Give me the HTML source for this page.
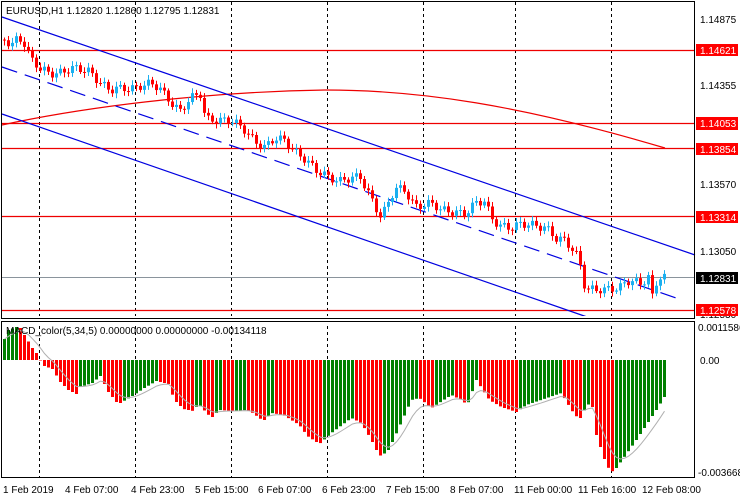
<!DOCTYPE html>
<html><head><meta charset="utf-8"><style>
html,body{margin:0;padding:0;background:#fff;width:740px;height:500px;overflow:hidden}
svg{display:block}
text{font-family:"Liberation Sans",sans-serif;font-size:10px;fill:#000}
</style></head><body>
<svg id="s" width="740" height="500" viewBox="0 0 740 500" xmlns="http://www.w3.org/2000/svg">
<rect width="740" height="500" fill="#fff"/>
<g id="grid" stroke="#000" stroke-dasharray="3,3" stroke-width="1">
<line x1="39.5" y1="2" x2="39.5" y2="477"/><line x1="135.5" y1="2" x2="135.5" y2="477"/><line x1="231.5" y1="2" x2="231.5" y2="477"/><line x1="327.5" y1="2" x2="327.5" y2="477"/><line x1="423.5" y1="2" x2="423.5" y2="477"/><line x1="515.5" y1="2" x2="515.5" y2="477"/><line x1="611.5" y1="2" x2="611.5" y2="477"/>
</g>
<rect x="0" y="316" width="695" height="7" fill="#fff"/>
<g stroke="#e00" stroke-width="1.3" fill="none">
<line x1="2" y1="50.5" x2="695" y2="50.5"/><line x1="2" y1="123.5" x2="695" y2="123.5"/><line x1="2" y1="148.5" x2="695" y2="148.5"/><line x1="2" y1="216.5" x2="695" y2="216.5"/><line x1="2" y1="310.5" x2="695" y2="310.5"/>
<path d="M2,125 C80,108 200,92 325,90 C420,90 520,105 665,148" stroke-width="1.2"/>
</g>
<line x1="2" y1="277.5" x2="695" y2="277.5" stroke="#8a949c"/>
<g stroke="#0000e0" stroke-width="1.2" fill="none">
<line x1="2" y1="17" x2="695" y2="255"/>
<line x1="2" y1="67" x2="682" y2="300" stroke-dasharray="16,8"/>
<line x1="2" y1="114" x2="590" y2="318"/>
</g>
<g id="cand"></g>
<g id="hist"></g>
<path id="sig" fill="none" stroke="#b0b0b0" stroke-width="1"/>
<rect x="0" y="316" width="695" height="7" fill="#fff"/>
<g stroke="#000" fill="none" stroke-width="1">
<rect x="1.5" y="1.5" width="693" height="317"/>
<rect x="1.5" y="321.5" width="693" height="156"/>
</g>
<text x="6" y="14">EURUSD,H1  1.12820 1.12860 1.12795 1.12831</text>
<text x="6" y="334">MACD_color(5,34,5) 0.00000000 0.00000000 -0.00134118</text>
<g>
<text x="700" y="23">1.14875</text>
<text x="700" y="89">1.14355</text>
<text x="700" y="188">1.13570</text>
<text x="700" y="255">1.13050</text>
<text x="700" y="318" font-size="9">1.12530</text>
<rect x="696" y="44" width="42" height="12" fill="#f00"/><text x="700" y="54" style="fill:#fff">1.14621</text>
<rect x="696" y="117" width="42" height="13" fill="#f00"/><text x="700" y="127" style="fill:#fff">1.14053</text>
<rect x="696" y="143" width="42" height="12" fill="#f00"/><text x="700" y="153" style="fill:#fff">1.13854</text>
<rect x="696" y="211" width="42" height="12" fill="#f00"/><text x="700" y="221" style="fill:#fff">1.13314</text>
<rect x="696" y="272" width="42" height="12" fill="#000"/><text x="700" y="282" style="fill:#fff">1.12831</text>
<rect x="696" y="304" width="42" height="12" fill="#f00"/><text x="700" y="314" style="fill:#fff">1.12578</text>
<text x="698" y="331">0.0011586</text>
<text x="700" y="364">0.00</text>
<text x="698" y="476">-0.0036688</text>
</g>
<g>
<text x="3" y="493">1 Feb 2019</text>
<text x="65" y="493">4 Feb 07:00</text>
<text x="131" y="493">4 Feb 23:00</text>
<text x="195" y="493">5 Feb 15:00</text>
<text x="258" y="493">6 Feb 07:00</text>
<text x="322" y="493">6 Feb 23:00</text>
<text x="386" y="493">7 Feb 15:00</text>
<text x="450" y="493">8 Feb 07:00</text>
<text x="514" y="493">11 Feb 00:00</text>
<text x="578" y="493">11 Feb 16:00</text>
<text x="642" y="493">12 Feb 08:00</text>
</g>
</svg>
<script>
(function(){
var NS="http://www.w3.org/2000/svg";
function interp(k,x){for(var i=0;i<k.length-1;i++){if(x<=k[i+1][0]){var a=k[i],b=k[i+1];return a[1]+(b[1]-a[1])*(x-a[0])/(b[0]-a[0]);}}return k[k.length-1][1];}
var pk=[[3,40],[12,42],[18,36],[25,45],[30,60],[40,70],[55,72],[75,70],[90,70],[100,82],[110,92],[125,88],[140,85],[150,85],[160,90],[170,100],[180,110],[190,100],[200,95],[205,118],[215,118],[230,122],[245,130],[255,140],[265,148],[275,140],[285,140],[295,150],[305,160],[315,172],[330,176],[340,180],[350,180],[360,178],[370,195],[380,215],[385,210],[395,190],[405,190],[415,205],[430,205],[440,210],[455,210],[465,215],[475,205],[485,200],[490,215],[500,225],[510,230],[520,225],[530,222],[545,228],[555,240],[565,240],[575,250],[580,265],[585,290],[595,292],[610,287],[620,286],[630,282],[640,285],[648,275],[652,295],[658,275],[665,278]];
var g=document.getElementById("cand"),h="";
var prev=interp(pk,1);
for(var i=0;i<166;i++){var x=4+4*i;var c=interp(pk,x)+4*Math.sin(i*1.7)+2*Math.sin(i*0.63);var o=prev;prev=c;
var bull=c<o;var col=bull?"#1ab0f0":"#f00";var top=Math.min(o,c),bot=Math.max(o,c);if(bot-top<1)bot=top+1;
var hi=top-2-Math.abs(3*Math.sin(i*2.3)),lo=bot+2+Math.abs(3*Math.cos(i*1.9));
h+='<line x1="'+(x+0.5)+'" y1="'+hi+'" x2="'+(x+0.5)+'" y2="'+lo+'" stroke="'+col+'"/>';
h+='<rect x="'+(x-1)+'" y="'+top+'" width="3" height="'+(bot-top)+'" fill="'+col+'"/>';}
g.innerHTML=h;
var hk=[[3,339],[7,330],[15,327],[19,328],[23,335],[31,348],[35,353],[39,360],[43,366],[51,369],[59,382],[67,390],[75,394],[79,387],[91,383],[99,376],[107,392],[115,402],[119,403],[131,396],[143,388],[155,381],[167,384],[173,400],[182,409],[192,411],[197,404],[210,418],[218,410],[233,411],[245,410],[250,412],[262,421],[270,413],[282,415],[298,425],[306,436],[318,444],[330,433],[350,418],[360,423],[370,440],[378,456],[386,452],[392,440],[410,400],[418,398],[430,408],[450,395],[460,400],[466,405],[475,380],[488,400],[500,407],[515,412],[525,405],[560,393],[570,410],[578,420],[582,412],[590,400],[595,435],[605,465],[610,472],[615,468],[635,440],[655,410],[663,397]];
var hg=document.getElementById("hist"),hh="",pv=null,sig=null,sp="";
for(var i=0;i<166;i++){var x=3+4*i;var y=interp(hk,x);var v=360-y;
var red=pv!==null&&v<pv;if(pv===null)red=false;pv=v;
var t=Math.min(y,360),b=Math.max(y,360);
hh+='<rect x="'+x+'" y="'+t+'" width="3" height="'+Math.max(b-t,0.5)+'" fill="'+(red?"#f00":"#008000")+'"/>';
sig=sig===null?y:sig+(y-sig)*0.3;sp+=(i?"L":"M")+(x+1.5)+","+sig.toFixed(1);}
hg.innerHTML=hh;document.getElementById("sig").setAttribute("d",sp);
})();
</script>
</body></html>
